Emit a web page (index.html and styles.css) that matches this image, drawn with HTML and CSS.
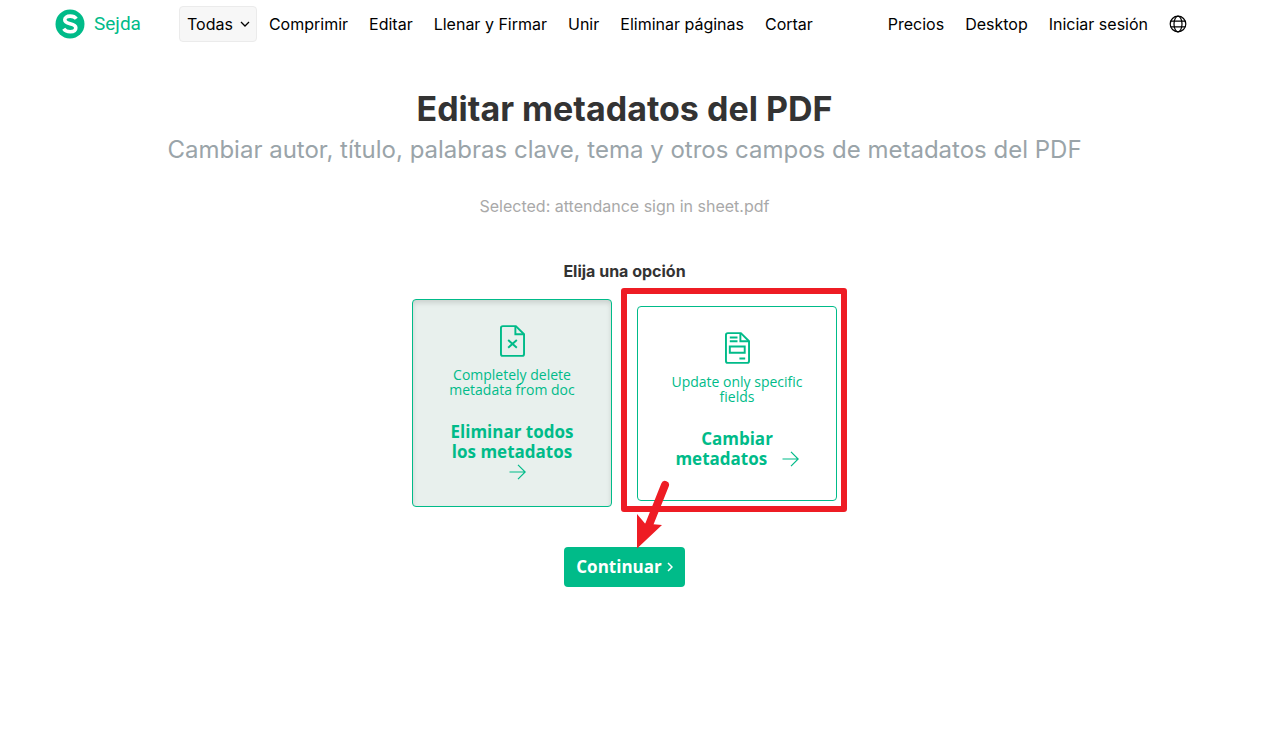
FILE: index.html
```html
<!DOCTYPE html>
<html lang="es">
<head>
<meta charset="utf-8">
<title>Editar metadatos del PDF - Sejda</title>
<link rel="stylesheet" href="styles.css">
</head>
<body>
<header class="topbar">
  <a class="brand" href="#">
    <svg class="brand-mark" viewBox="0 0 30 30" aria-hidden="true"><circle cx="15" cy="15" r="14.5" fill="#00bb89"/><path d="M21.300 9.800C20 8 17.800 7.100 15.100 7.100c-3.200 0-5.300 1.500-5.300 3.700 0 2.700 2.500 3.300 5.300 3.900 3 .6 5.700 1.300 5.700 4.100 0 2.600-2.400 4-5.600 4-2.900 0-5.200-1.100-6.500-3" fill="none" stroke="#fff" stroke-width="3.600"/></svg>
    <span>Sejda</span>
  </a>
  <nav class="tools">
    <button class="all-tools" type="button" aria-haspopup="true">Todas
      <svg class="caret" viewBox="0 0 10 6" aria-hidden="true"><path d="M1 1l4 4 4-4" fill="none" stroke="currentColor" stroke-width="1.3"/></svg>
    </button>
    <a href="#">Comprimir</a>
    <a href="#">Editar</a>
    <a href="#">Llenar y Firmar</a>
    <a href="#">Unir</a>
    <a href="#">Eliminar páginas</a>
    <a href="#">Cortar</a>
  </nav>
  <nav class="account">
    <a href="#">Precios</a>
    <a href="#">Desktop</a>
    <a href="#">Iniciar sesión</a>
    <a class="language" href="#" aria-label="Idioma">
      <svg class="globe" viewBox="0 0 18 18" fill="none" stroke="currentColor" stroke-width="1.2" aria-hidden="true"><circle cx="9" cy="9" r="7.8"/><ellipse cx="9" cy="9" rx="4" ry="7.8"/><path d="M1.8 6.2h14.4M1.8 11.8h14.4"/></svg>
    </a>
  </nav>
</header>
<main class="task">
  <h1 class="title">Editar metadatos del PDF</h1>
  <p class="subtitle">Cambiar autor, título, palabras clave, tema y otros campos de metadatos del PDF</p>
  <p class="selected">Selected: attendance sign in sheet.pdf</p>
  <h2 class="prompt">Elija una opción</h2>
  <div class="options">
    <button class="option option-active" type="button">
      <svg class="doc" viewBox="0 0 26 33" fill="none" stroke="currentColor" stroke-width="2" aria-hidden="true"><path d="M3 1h13.5L25 9.500V30a2 2 0 0 1-2 2H3a2 2 0 0 1-2-2V3a2 2 0 0 1 2-2z"/><path d="M16 1v8.500h9"/><path d="M8.500 15.500l9 8M17.500 15.500l-9 8"/></svg>
      <span class="hint">Completely delete metadata from doc</span>
      <span class="action">Eliminar todos los metadatos <svg class="arrow" viewBox="0 0 17 16" fill="none" stroke="currentColor" stroke-width="1.2" aria-hidden="true"><path d="M.5 8H16M9 .8L16.200 8 9 15.200"/></svg></span>
    </button>
    <div class="marked">
      <button class="option option-update" type="button">
        <svg class="doc" viewBox="0 0 26 33" fill="none" stroke="currentColor" stroke-width="2" aria-hidden="true"><path d="M3 1h13.500L25 9.500V30a2 2 0 0 1-2 2H3a2 2 0 0 1-2-2V3a2 2 0 0 1 2-2z"/><path d="M16 1v8.500h9"/><path d="M5 5.500h8M5 9.500h8M5 15h15.500v6.500H5zM15 27.500h6"/></svg>
        <span class="hint">Update only specific fields</span>
        <span class="action">Cambiar metadatos <svg class="arrow" viewBox="0 0 17 16" fill="none" stroke="currentColor" stroke-width="1.2" aria-hidden="true"><path d="M.5 8H16M9 .8L16.200 8 9 15.200"/></svg></span>
      </button>
      <span class="frame"></span>
      <svg class="pointer" viewBox="0 0 36 70" aria-hidden="true"><path d="M29 6L13 46" stroke="#ee1c24" stroke-width="8" stroke-linecap="round"/><path d="M1 35L9 44.500 26 46 1 69.500z" fill="#ee1c24"/></svg>
    </div>
  </div>
  <button class="continue" type="button">Continuar
    <svg class="next" viewBox="0 0 6 10" aria-hidden="true"><path d="M1 1l4 4-4 4" fill="none" stroke="currentColor" stroke-width="1.5"/></svg>
  </button>
</main>
</body>
</html>
```
FILE: styles.css
```css
* { box-sizing: border-box; }
body {
  margin: 0;
  padding-right: 12px;
  background: #fff;
  color: #333;
  font: 16px/24px Inter, "Liberation Sans", sans-serif;
}
a { color: #000; text-decoration: none; }
button { font-family: inherit; cursor: pointer; }
svg { display: block; flex: none; }
.topbar {
  display: flex;
  align-items: center;
  height: 47px;
  padding: 0 62px 0 55px;
}
.brand {
  display: flex;
  align-items: center;
  gap: 9px;
  width: 124px;
  color: #00bb89;
  font: 19px/24px Roboto, sans-serif;
}
.brand-mark { width: 30px; height: 30px; }
.tools, .account { display: flex; align-items: center; gap: 21px; white-space: nowrap; }
.account { margin-left: auto; }
.all-tools {
  display: flex;
  align-items: center;
  gap: 7px;
  height: 36px;
  margin-right: -9px;
  padding: 0 6px 0 7px;
  border: 1px solid #ebebeb;
  border-radius: 4px;
  background: #f7f7f7;
  color: #000;
  font-size: 16px;
}
.caret { width: 10px; height: 6px; }
.globe { width: 18px; height: 18px; }
.task {
  display: flex;
  flex-direction: column;
  align-items: center;
  padding: 41px 16px;
  text-align: center;
}
.title { margin: 0; font-size: 34px; line-height: 42px; }
.subtitle { margin: 4px 0 0; color: #9aa4a9; font-size: 24px; line-height: 32px; }
.selected { margin: 28px 0 0; color: #a9a9a9; font-size: 16px; }
.prompt { margin: 41px 0 0; font-size: 16px; line-height: 24px; }
.options { display: flex; align-items: center; gap: 25px; margin-top: 16px; }
.option {
  display: flex;
  flex-direction: column;
  align-items: center;
  width: 200px;
  padding: 25px 27px 24px;
  border: 1px solid #00bb89;
  border-radius: 4px;
  background: #fff;
  color: #00bb89;
  font-family: "Open Sans", "Noto Sans", sans-serif;
}
.option-active {
  background: #e8f0ed;
  box-shadow: inset 0 3px 5px rgba(0, 0, 0, .125);
}
.option-update { padding-bottom: 31px; }
.doc { width: 25px; height: 32px; }
.hint { margin-top: 10px; font-size: 14px; line-height: 15px; }
.action { margin-top: 25px; font-size: 17px; line-height: 20px; font-weight: 700; }
.arrow { display: inline-block; width: 17px; height: 16px; margin-left: 10px; vertical-align: -2px; }
.marked { position: relative; }
.frame {
  position: absolute;
  inset: -18px -10px -11px -16px;
  border: 6px solid #ee1c24;
  border-radius: 3px;
  pointer-events: none;
}
.pointer {
  position: absolute;
  left: -1px;
  bottom: -48px;
  width: 36px;
  height: 70px;
  pointer-events: none;
}
.continue {
  display: flex;
  align-items: center;
  gap: 5px;
  height: 40px;
  margin-top: 40px;
  padding: 0 12px;
  border: 0;
  border-radius: 4px;
  background: #00bb89;
  color: #fff;
  font: 700 17px/24px "Open Sans", "Noto Sans", sans-serif;
}
.next { width: 6px; height: 10px; }
```
